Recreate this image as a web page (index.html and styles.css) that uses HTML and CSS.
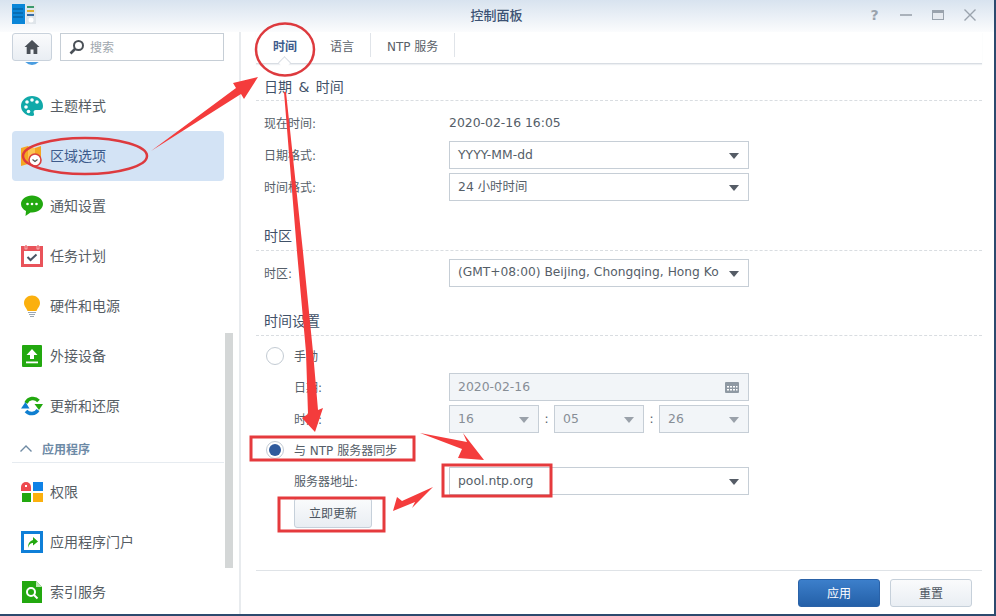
FILE: index.html
```html
<!DOCTYPE html>
<html lang="zh">
<head>
<meta charset="utf-8">
<title>控制面板</title>
<link rel="stylesheet" href="styles.css">
</head>
<body>
<div class="window">
  <header class="titlebar">
    <svg class="app-icon" viewBox="0 0 24 20" width="24" height="20">
      <rect x="0" y="0" width="13" height="20" fill="#0b86d8"/>
      <path d="M1 5h10M1 9h10M1 13h10" stroke="#04558f" stroke-width="1"/>
      <rect x="14" y="0" width="10" height="20" fill="#dfe5ea"/>
      <rect x="15" y="2" width="7" height="2" fill="#3c9a6c"/>
      <rect x="15" y="6" width="7" height="2" fill="#e0b030"/>
      <rect x="15" y="10" width="7" height="2" fill="#3a6ea5"/>
      <circle cx="19" cy="16" r="2.5" fill="#fff"/>
    </svg>
    <h1 class="title">控制面板</h1>
    <div class="controls">
      <span class="ctl-help">?</span>
      <svg width="12" height="12" viewBox="0 0 12 12"><path d="M0 6h12" stroke="#9aa3ad" stroke-width="1.6"/></svg>
      <svg width="12" height="12" viewBox="0 0 12 12"><rect x="0.5" y="1.5" width="11" height="9" fill="#e6eaef" stroke="#9aa3ad"/><rect x="0" y="1" width="12" height="3" fill="#9aa3ad"/></svg>
      <svg width="12" height="12" viewBox="0 0 12 12"><path d="M0.5 0.5l11 11M11.500 0.5l-11 11" stroke="#9aa3ad" stroke-width="1.4"/></svg>
    </div>
  </header>

  <div class="body">
    <aside class="sidebar">
      <div class="side-top">
        <button class="home" type="button">
          <svg width="16" height="16" viewBox="0 0 16 16"><path d="M8 1L0.500 8h2.200v7h3.800v-4.500h3V15h3.800V8h2.200z" fill="#4a5057"/></svg>
        </button>
        <div class="search">
          <svg width="16" height="16" viewBox="0 0 16 16"><circle cx="9.500" cy="6.500" r="4.500" fill="none" stroke="#4a5057" stroke-width="2"/><path d="M6 10l-4.500 4.500" stroke="#4a5057" stroke-width="2.600"/></svg>
          <span>搜索</span>
        </div>
      </div>
      <nav class="nav">
        <div class="item item-clipped"><svg class="ico" viewBox="0 0 22 22"><circle cx="11" cy="11" r="9" fill="#4a9de0"/></svg></div>
        <div class="item"><svg class="ico" viewBox="0 0 22 22"><path d="M11 1C5 1 0 5.500 0 11s5 10 11 10c2 0 2.500-1.500 1.800-2.800-.8-1.600.2-3.200 2-3.200H19c2 0 3-1.500 3-4C22 5 17 1 11 1z" fill="#11a9a9"/><circle cx="6" cy="7" r="1.800" fill="#fff"/><circle cx="11" cy="5" r="1.800" fill="#fff"/><circle cx="16" cy="7" r="1.800" fill="#fff"/><circle cx="5" cy="12" r="1.800" fill="#fff"/><circle cx="7.500" cy="16.500" r="1.800" fill="#fff"/></svg><span>主题样式</span></div>
        <div class="item active"><svg class="ico" viewBox="0 0 22 22"><path d="M0 3l7-2v18l-7 2z" fill="#f5a623"/><path d="M7 1l7 2v16l-7-2z" fill="#fbc654"/><path d="M14 3l6-2v16l-6 2z" fill="#f5a623"/><circle cx="14" cy="15" r="6" fill="#fff" stroke="#d9413f" stroke-width="1.600"/><path d="M11.500 14.500l2.500 2 2.500-2" fill="none" stroke="#555" stroke-width="1.200"/></svg><span>区域选项</span></div>
        <div class="item"><svg class="ico" viewBox="0 0 22 22"><path d="M11 0.500C5 0.500 0 4.300 0 9c0 3 2 5.500 5 7l-.5 5 5-3.600c.5.100 1 .100 1.500.100 6 0 11-3.800 11-8.500S17 .5 11 .5z" fill="#22a80f"/><circle cx="6.500" cy="9" r="1.300" fill="#fff"/><circle cx="11" cy="9" r="1.300" fill="#fff"/><circle cx="15.500" cy="9" r="1.300" fill="#fff"/></svg><span>通知设置</span></div>
        <div class="item"><svg class="ico" viewBox="0 0 22 22"><rect x="0" y="1" width="22" height="21" fill="#e9535a"/><rect x="3" y="6" width="16" height="13" fill="#fff"/><rect x="4" y="0" width="2" height="4" fill="#e9535a" stroke="#fff" stroke-width=".5"/><rect x="16" y="0" width="2" height="4" fill="#e9535a" stroke="#fff" stroke-width=".5"/><path d="M6.500 12l3 3 6-5.500" fill="none" stroke="#4a5564" stroke-width="2"/></svg><span>任务计划</span></div>
        <div class="item"><svg class="ico" viewBox="0 0 22 22"><path d="M11 0.500c-4.500 0-8 3.300-8 7.500 0 3.500 2.500 5 3.500 8h9c1-3 3.500-4.500 3.500-8 0-4.200-3.500-7.500-8-7.500z" fill="#fbb00e"/><path d="M7 17.500h8M8 19.500h6M9 21.500h4" stroke="#9aa7b3" stroke-width="1"/></svg><span>硬件和电源</span></div>
        <div class="item"><svg class="ico" viewBox="0 0 22 22"><rect x="1" y="0" width="20" height="22" rx="1" fill="#22a80f"/><path d="M11 4l5.500 6H13v4H9v-4H5.500z" fill="#fff"/><rect x="5" y="16.500" width="12" height="1.800" fill="#fff"/></svg><span>外接设备</span></div>
        <div class="item"><svg class="ico" viewBox="0 0 22 22"><path d="M5 8A7.500 7.500 0 0 1 17.500 6" fill="none" stroke="#22a80f" stroke-width="3.500"/><path d="M13.500 9H22l-4 6z" fill="#22a80f"/><path d="M17 15A7.500 7.500 0 0 1 5 16" fill="none" stroke="#0f7fd0" stroke-width="3.500"/><path d="M0 13.500h8.500L4.500 7z" fill="#0f7fd0"/></svg><span>更新和还原</span></div>
        <div class="group">
          <svg width="12" height="7" viewBox="0 0 12 7"><path d="M0.500 6.500L6 1l5.500 5.500" fill="none" stroke="#6f8aa3" stroke-width="1.400"/></svg>
          <span>应用程序</span>
        </div>
        <div class="item"><svg class="ico" viewBox="0 0 22 22"><path d="M0 10V6a5 5 0 0 1 10 0v4z" fill="#ee4a4f"/><rect x="4" y="4" width="2" height="2" fill="#fff"/><rect x="12" y="1" width="10" height="9" fill="#0f82e6"/><rect x="1" y="12" width="9" height="9" fill="#22a80f"/><rect x="12" y="12" width="10" height="9" fill="#fbb00e"/></svg><span>权限</span></div>
        <div class="item"><svg class="ico" viewBox="0 0 22 22"><rect x="0" y="0" width="22" height="22" fill="#0f7fd8"/><rect x="3" y="3" width="16" height="16" fill="#fff"/><path d="M7 17c0-5 2-7 5-8V6l5 4.500-5 4v-2.500c-2 0-4 1-5 5z" fill="#22a80f"/></svg><span>应用程序门户</span></div>
        <div class="item"><svg class="ico" viewBox="0 0 22 22"><path d="M1 0h14l6 6v16H1z" fill="#22a80f"/><path d="M15 0l6 6h-6z" fill="#bfe6b8"/><circle cx="10" cy="11" r="4" fill="none" stroke="#fff" stroke-width="2"/><path d="M13 14l3.500 3.500" stroke="#fff" stroke-width="2"/></svg><span>索引服务</span></div>
      </nav>
      <div class="scrollbar"></div>
    </aside>

    <main class="main">
      <div class="tabs">
        <div class="tab tab-active">时间</div>
        <div class="tab">语言</div>
        <div class="tab">NTP 服务</div>
      </div>

      <div class="content">
        <section class="section">
          <h2 class="head">日期 &amp; 时间</h2>
          <div class="rows">
            <div class="row"><label class="label">现在时间:</label><span class="val">2020-02-16 16:05</span></div>
            <div class="row"><label class="label">日期格式:</label><div class="select"><span class="val">YYYY-MM-dd</span></div></div>
            <div class="row"><label class="label">时间格式:</label><div class="select"><span class="val">24 小时时间</span></div></div>
          </div>
        </section>

        <section class="section section-zone">
          <h2 class="head">时区</h2>
          <div class="rows">
            <div class="row"><label class="label">时区:</label><div class="select"><span class="val val-zone">(GMT+08:00) Beijing, Chongqing, Hong Ko</span></div></div>
          </div>
        </section>

        <section class="section section-time">
          <h2 class="head">时间设置</h2>
          <div class="rows">
            <div class="radio-row"><span class="radio"></span><span class="label-text">手动</span></div>
            <div class="row indent"><label class="label">日期:</label><div class="select disabled no-arrow"><span class="val">2020-02-16</span>
              <svg width="14" height="11" viewBox="0 0 14 11"><rect width="14" height="11" rx="1" fill="#8f99a3"/><path d="M2 4h2v1.500H2zM5 4h2v1.500H5zM8 4h2v1.500H8zM11 4h1.500v1.500H11zM2 7h2v1.500H2zM5 7h2v1.500H5zM8 7h2v1.500H8zM11 7h1.500v1.500H11z" fill="#fff"/></svg>
            </div></div>
            <div class="row indent"><label class="label">时间:</label>
              <div class="time-group">
                <div class="select disabled"><span class="val">16</span></div><span class="colon">:</span>
                <div class="select disabled"><span class="val">05</span></div><span class="colon">:</span>
                <div class="select disabled"><span class="val">26</span></div>
              </div>
            </div>
            <div class="radio-row"><span class="radio checked"></span><span class="label-text">与 NTP 服务器同步</span></div>
            <div class="row indent"><label class="label">服务器地址:</label><div class="select"><span class="val">pool.ntp.org</span></div></div>
            <div class="row indent row-btn"><button class="btn btn-update" type="button">立即更新</button></div>
          </div>
        </section>
      </div>

      <footer class="footer">
        <button class="btn btn-primary" type="button">应用</button>
        <button class="btn btn-reset" type="button">重置</button>
      </footer>
    </main>
  </div>

  <svg class="annot" viewBox="0 0 996 616" width="996" height="616">
    <ellipse cx="285" cy="49.500" rx="29" ry="26" fill="none" stroke="#dd3a3e" stroke-width="2.500"/>
    <ellipse cx="85" cy="156" rx="62" ry="18" fill="none" stroke="#dd3a3e" stroke-width="2.500"/>
    <polygon points="151,151 236,88 233,83 258,77 244,99 241,94" fill="#f43c3c"/>
    <polygon points="284,92 286,92 303,252 313,352 318,410 323,408 315,432 302,418 308,414 306,352 297,252" fill="#f43c3c"/>
    <polygon points="420,433 467,442 463,433 484,460 458,458 462,449" fill="#f43c3c"/>
    <polygon points="433,487 412,508 415,502 393,511 397,497 402,501" fill="#f43c3c"/>
    <rect x="251" y="437" width="163" height="23" fill="none" stroke="#e53a3d" stroke-width="3"/>
    <rect x="443" y="465" width="108" height="31" fill="none" stroke="#e53a3d" stroke-width="3"/>
    <rect x="279" y="498" width="105" height="33" fill="none" stroke="#e53a3d" stroke-width="3"/>
  </svg>
</div>
</body>
</html>
```

FILE: styles.css
```css
* { box-sizing: border-box; }
html, body { margin: 0; padding: 0; }
body {
  width: 996px;
  height: 616px;
  overflow: hidden;
  background: #fff;
  font-family: "DejaVu Sans", "Noto Sans CJK SC", sans-serif;
  font-size: 12px;
  color: #555e68;
}
.window {
  position: relative;
  width: 996px;
  height: 616px;
  display: flex;
  flex-direction: column;
  border-right: 2px solid #2c4a6e;
  border-bottom: 2px solid #2c4a6e;
  background: #fff;
  overflow: hidden;
}
.titlebar {
  height: 32px;
  flex: none;
  display: flex;
  align-items: center;
  padding: 0 17px 2px 12px;
  background: linear-gradient(#d8e3ef, #fbfcfd);
}
.app-icon { flex: none; margin-top: -2px; }
.title {
  flex: 1;
  margin: 0 0 2px;
  text-align: center;
  font-size: 13px;
  font-weight: 500;
  color: #3c5273;
  padding-left: 88px;
}
.controls { display: flex; align-items: center; gap: 20px; width: 108px; flex: none; }
.ctl-help { width: 11px; font-size: 14px; line-height: 12px; color: #9aa3ad; font-weight: 700; text-align: center; }
.body { flex: 1; min-height: 0; display: flex; }

/* sidebar */
.sidebar {
  position: relative;
  width: 241px;
  flex: none;
  border-right: 2px solid #e8ebee;
  display: flex;
  flex-direction: column;
  min-height: 0;
}
.side-top { display: flex; gap: 8px; padding: 1px 0 0 12px; flex: none; }
.home {
  width: 40px;
  height: 28px;
  padding: 0;
  border: 1px solid #c9d2dc;
  border-radius: 3px;
  background: linear-gradient(#fafbfc, #e9eef3);
  display: flex;
  align-items: center;
  justify-content: center;
}
.search {
  width: 164px;
  height: 28px;
  border: 1px solid #c6ced6;
  display: flex;
  align-items: center;
  gap: 5px;
  padding-left: 8px;
  color: #a0a7ae;
}
.search span { margin-bottom: 2px; }
.nav { flex: 1; min-height: 0; overflow: hidden; margin-top: 1px; padding: 0 15px 0 12px; }
.item {
  height: 50px;
  display: flex;
  align-items: center;
  gap: 7px;
  padding-left: 9px;
  font-size: 14px;
  color: #565d64;
  border-radius: 4px;
}
.item span { margin-bottom: 2px; }
.item-clipped { margin-top: -31px; }
.ico { width: 22px; height: 22px; flex: none; }
.item.active { background: #d3e3f5; color: #3d5b8c; }
.group {
  height: 32px;
  margin-bottom: 4px;
  display: flex;
  align-items: center;
  gap: 10px;
  padding: 4px 0 0 8px;
  border-bottom: 1px solid #e6ebf0;
  font-weight: 700;
  color: #6d8aa6;
}
.scrollbar {
  position: absolute;
  left: 225px;
  top: 301px;
  width: 8px;
  height: 235px;
  background: #d4d7d7;
}

/* main */
.main { flex: 1; min-width: 0; display: flex; flex-direction: column; padding: 0 12px 0 15px; }
.tabs {
  height: 32px;
  flex: none;
  display: flex;
  align-items: stretch;
  border-bottom: 1px solid #d8dde3;
  box-shadow: 0 1px 1px #eef0f3;
}
.tab {
  position: relative;
  display: flex;
  align-items: center;
  height: 24px;
  margin-top: 1px;
  padding: 0 16px;
  border-right: 1px solid #e0e4e9;
  color: #5a6169;
}
.tab-active {
  font-weight: 700;
  color: #3d5b8c;
  width: 58px;
  justify-content: center;
  border-right: 0;
}
.tab-active::after {
  content: "";
  position: absolute;
  left: 24px;
  top: 25px;
  width: 8px;
  height: 8px;
  background: #fff;
  border-left: 1px solid #d8dde3;
  border-top: 1px solid #d8dde3;
  transform: rotate(45deg);
}
.content { flex: 1; min-height: 0; padding: 8px 0 0 8px; }
.section-zone { margin-top: 21px; }
.section-time { margin-top: 20px; }
.head {
  margin: 0 0 8px -8px;
  height: 29px;
  padding: 5px 0 0 8px;
  border-bottom: 1px dashed #d9dde1;
  font-size: 14px;
  line-height: 20px;
  font-weight: 400;
  word-spacing: 2px;
  color: #3f5168;
}
.section-zone .head, .section-time .head { padding-top: 4px; }
.section-time .head { margin-bottom: 7px; }
.rows { display: flex; flex-direction: column; gap: 4px; }
.row { height: 28px; display: flex; align-items: center; }
.label { width: 185px; flex: none; margin-bottom: 2px; }
.val { font-size: 12.400px; white-space: nowrap; margin-bottom: 2px; }
.val-zone { font-size: 12.240px; }
.select {
  position: relative;
  width: 300px;
  height: 28px;
  border: 1px solid #c6ced6;
  background: #fff;
  display: flex;
  align-items: center;
  justify-content: space-between;
  padding: 0 9px 0 8px;
}
.select::after {
  content: "";
  flex: none;
  border-left: 5px solid transparent;
  border-right: 5px solid transparent;
  border-top: 6px solid #555c66;
  margin-left: 5px;
  margin-top: 2px;
}
.select.no-arrow::after { display: none; }
.select.disabled { background: #f2f5f8; color: #878e96; }
.select.disabled::after { border-top-color: #9aa1aa; }
.radio-row { height: 26px; display: flex; align-items: center; gap: 10px; padding-left: 2px; }
.radio {
  width: 18px;
  height: 18px;
  flex: none;
  border-radius: 50%;
  border: 1px solid #c3cbd3;
  background: #fff;
  display: flex;
  align-items: center;
  justify-content: center;
}
.radio.checked::after {
  content: "";
  width: 12px;
  height: 12px;
  border-radius: 50%;
  background: #2f5a9c;
}
.label-text { font-size: 12px; margin-bottom: 2px; }
.indent { padding-left: 30px; }
.indent .label { width: 155px; }
.time-group { display: flex; align-items: center; width: 300px; }
.time-group .select { width: 90px; }
.colon { width: 15px; text-align: center; }
.row-btn { height: 30px; margin-top: -1px; }
.btn {
  font: inherit;
  height: 28px;
  border-radius: 3px;
  border: 1px solid #c6d0da;
  background: linear-gradient(#fafbfc, #e9eef3);
  color: #4d5661;
  padding: 0 0 2px;
}
.btn-update { width: 78px; height: 30px; }
.footer {
  height: 44px;
  flex: none;
  border-top: 1px solid #dfe3e7;
  display: flex;
  justify-content: flex-end;
  align-items: flex-start;
  gap: 10px;
  padding: 8px 10px 0 0;
}
.btn-primary, .btn-reset { width: 82px; }
.btn-primary {
  background: linear-gradient(#3c7fcb, #2460a8);
  border-color: #2a62a8;
  color: #fff;
}

/* callouts drawn over the screenshot */
.annot { position: absolute; left: 0; top: 0; pointer-events: none; }
```
